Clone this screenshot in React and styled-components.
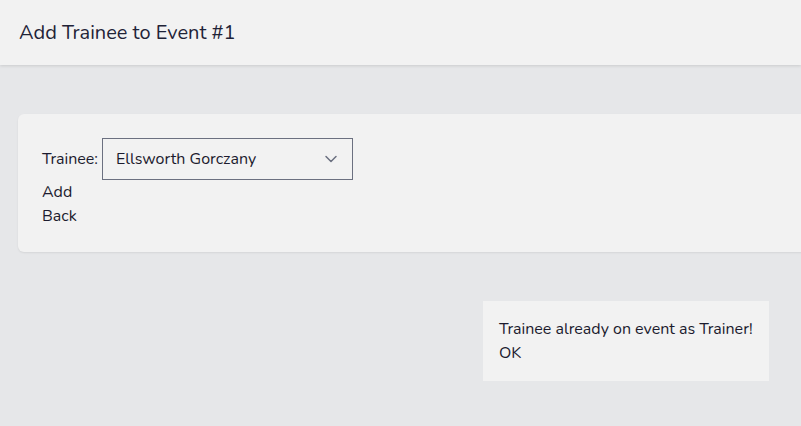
import React from 'react'
import styled, { createGlobalStyle } from 'styled-components'

const Global = createGlobalStyle`
    html, body {
        margin: 0;
        padding: 0;
        background: #E6E7E9;
        overflow: hidden;
        font-family: "Nunito", "Lato", "Noto Sans", sans-serif;
        color: #1C1B2E;
    }
`
const Page = styled.div`
    position: relative;
    min-height: 426px;
`
const Header = styled.header`
    height: 65px;
    background: #F2F2F2;
    box-shadow: 0 1px 3px rgba(0, 0, 0, 0.12);
    display: flex;
    align-items: center;
    padding: 0 19px;
`
const Title = styled.h1`
    margin: 0;
    font-weight: 400;
    font-size: 20px;
    color: #1F2337;
`
const Main = styled.main`
    padding: 49px 0 0 18px;
`
const Card = styled.div`
    background: #F2F2F2;
    border-radius: 6px;
    box-shadow: 0 1px 2px rgba(0, 0, 0, 0.08);
    padding: 24px;
    margin-right: -20px;
`
const Row = styled.label`
    display: flex;
    align-items: center;
    gap: 4px;
    font-size: 16px;
    line-height: 24px;
`
const Select = styled.div`
    width: 251px;
    height: 42px;
    box-sizing: border-box;
    border: 1px solid #6B7080;
    display: flex;
    align-items: center;
    justify-content: space-between;
    padding: 0 14px 0 13px;
    font-size: 16px;
`
const LinkText = styled.div`
    font-size: 16px;
    line-height: 24px;
`
const Toast = styled.div`
    position: absolute;
    right: 32px;
    top: 301px;
    width: 286px;
    box-sizing: border-box;
    background: #F2F2F2;
    padding: 16px;
    font-size: 16px;
    line-height: 24px;
`

export default function App() {
    return (
        <Page>
            <Global />
            <Header><Title>Add Trainee to Event #1</Title></Header>
            <Main>
                <Card>
                    <Row>
                        Trainee:
                        <Select>
                            <span>Ellsworth Gorczany</span>
                            <svg width="14" height="14" viewBox="0 0 14 14" fill="none">
                                <path d="M2 4.5 7 9.5 12 4.5" stroke="#6B7080" strokeWidth="1.5" strokeLinecap="round" strokeLinejoin="round" />
                            </svg>
                        </Select>
                    </Row>
                    <LinkText>Add</LinkText>
                    <LinkText>Back</LinkText>
                </Card>
            </Main>
            <Toast>
                <div>Trainee already on event as Trainer!</div>
                <div>OK</div>
            </Toast>
        </Page>
    )
}
